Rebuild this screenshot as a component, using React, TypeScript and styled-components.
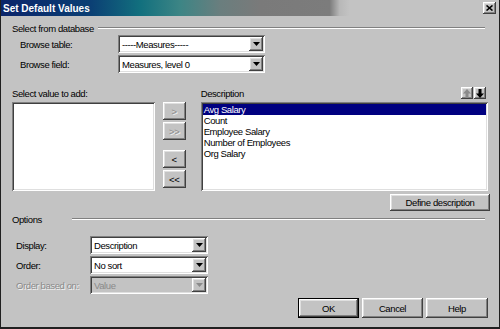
import styled, {createGlobalStyle} from "styled-components";

const Global = createGlobalStyle`
  body {
    margin: 0;
    background: #c3c3c3;
  }
`;

const sunken = `
  box-shadow: inset 1px 1px #808080, inset -1px -1px #ffffff,
    inset 2px 2px #404040, inset -2px -2px #dfdfdf;
`;

const raised = `
  box-shadow: inset -1px -1px #404040, inset 1px 1px #ffffff,
    inset -2px -2px #808080, inset 2px 2px #dfdfdf;
`;

const Window = styled.div`
  width: 500px;
  height: 329px;
  box-sizing: border-box;
  background: #c3c3c3;
  border-left: 1px solid #202020;
  border-right: 1px solid #202020;
  border-bottom: 2px solid #202020;
  display: flex;
  flex-direction: column;
  font-family: "Liberation Sans", Arial, sans-serif;
  font-size: 9.5px;
  letter-spacing: -0.4px;
  color: #000;
`;

const TitleBar = styled.div`
  height: 16px;
  flex-shrink: 0;
  display: flex;
  align-items: center;
  padding: 0 3px 0 2px;
  background: linear-gradient(90deg, #0a246a 0%, #0b3f74 18%, #12707e 28%, #3d8585 36%,
    #6a7e7e 44%, #7a7a7a 52%, #7c7c7c 66%, #b8b8b8 68%, #c3c3c3 70%);
  color: #fff;
  font-weight: bold;
  font-size: 10px;
  letter-spacing: 0;
`;

const CloseButton = styled.div`
  margin-left: auto;
  width: 13px;
  height: 12px;
  background: #c3c3c3;
  ${raised}
  display: flex;
  align-items: center;
  justify-content: center;
`;

const Body = styled.div`
  flex: 1;
  padding: 0 11px;
  display: flex;
  flex-direction: column;
`;

const GroupHeader = styled.div<{ $top: number; $gap: number }>`
  display: flex;
  align-items: center;
  height: 12px;
  margin-top: ${p => p.$top}px;
  gap: ${p => p.$gap}px;
`;

const GroupLine = styled.div`
  flex: 1;
  border-top: 1px solid #808080;
  border-bottom: 1px solid #ffffff;
  margin-right: 3px;
`;

const FieldGrid = styled.div<{ $label: number; $top: number; $indent: number }>`
  display: grid;
  grid-template-columns: ${p => p.$label}px auto;
  justify-content: start;
  row-gap: 2px;
  margin-top: ${p => p.$top}px;
  padding-left: ${p => p.$indent}px;
  align-items: center;
`;

const Label = styled.span<{ $disabled?: boolean }>`
  color: ${p => (p.$disabled ? "#8a8a8a" : "#000")};
  text-shadow: ${p => (p.$disabled ? "1px 1px #f4f4f4" : "none")};
`;

const Combo = styled.div<{ $width: number; $disabled?: boolean }>`
  width: ${p => p.$width}px;
  height: 18px;
  box-sizing: border-box;
  padding: 2px;
  display: flex;
  align-items: center;
  background: ${p => (p.$disabled ? "#c3c3c3" : "#fff")};
  color: ${p => (p.$disabled ? "#8a8a8a" : "#000")};
  ${sunken}
`;

const ComboText = styled.span`
  flex: 1;
  padding-left: 2px;
  white-space: nowrap;
  overflow: hidden;
`;

const ComboArrow = styled.div`
  width: 14px;
  height: 14px;
  background: #c3c3c3;
  ${raised}
  display: flex;
  align-items: center;
  justify-content: center;
`;

const ListsRow = styled.div`
  display: flex;
  margin-top: 13px;
  height: 105px;
`;

const ListColumn = styled.div<{ $width: number; $left: number }>`
  width: ${p => p.$width}px;
  margin-left: ${p => p.$left}px;
  display: flex;
  flex-direction: column;
  gap: 2px;
`;

const ListHeader = styled.div`
  height: 14px;
  display: flex;
  align-items: center;
  padding-right: 2px;
`;

const ListBox = styled.div`
  height: 89px;
  background: #fff;
  box-sizing: border-box;
  padding: 2px;
  ${sunken}
`;

const ListItem = styled.div<{ $selected?: boolean }>`
  height: 11px;
  line-height: 11px;
  padding-left: 1px;
  background: ${p => (p.$selected ? "#000080" : "transparent")};
  color: ${p => (p.$selected ? "#fff" : "#000")};
  white-space: nowrap;
`;

const MoveColumn = styled.div`
  margin-left: 8px;
  padding-top: 16px;
  display: flex;
  flex-direction: column;
  gap: 2px;
`;

const Button = styled.div<{ $w: number; $h: number; $disabled?: boolean; $default?: boolean }>`
  width: ${p => p.$w}px;
  height: ${p => p.$h}px;
  box-sizing: border-box;
  display: flex;
  align-items: center;
  justify-content: center;
  background: #c3c3c3;
  color: ${p => (p.$disabled ? "#8a8a8a" : "#000")};
  text-shadow: ${p => (p.$disabled ? "1px 1px #f4f4f4" : "none")};
  border: ${p => (p.$default ? "1px solid #000" : "none")};
  ${raised}
`;

const Spacer = styled.div<{ $h: number }>`
  height: ${p => p.$h}px;
`;

const OrderButtons = styled.div`
  margin-left: auto;
  display: flex;
  gap: 1px;
`;

const DefineRow = styled.div`
  display: flex;
  justify-content: flex-end;
  margin-top: 3px;
  margin-right: -2px;
`;

const FooterRow = styled.div`
  display: flex;
  justify-content: flex-end;
  gap: 3px;
  margin-top: 4px;
`;

function SelectBox({value, width, disabled}: { value: string; width: number; disabled?: boolean }) {
  return (
    <Combo $width={width} $disabled={disabled}>
      <ComboText>{value}</ComboText>
      <ComboArrow>
        <svg width="7" height="4" viewBox="0 0 7 4">
          <path d="M0 0h7L3.5 4z" fill={disabled ? "#8a8a8a" : "#000"} />
        </svg>
      </ComboArrow>
    </Combo>
  );
}

// thick arrow for the order buttons, rotated for "up"
function BigArrow({up, color}: { up?: boolean; color: string }) {
  return (
    <svg width="8" height="9" viewBox="0 0 8 9" style={{transform: up ? "rotate(180deg)" : undefined}}>
      <path d="M2.5 0h3v4.5H8L4 9 0 4.5h2.5z" fill={color} />
    </svg>
  );
}

const values = ["Avg Salary", "Count", "Employee Salary", "Number of Employees", "Org Salary"];

export default function App() {
  return (
    <>
      <Global />
      <Window>
        <TitleBar>
          Set Default Values
          <CloseButton>
            <svg width="7" height="6" viewBox="0 0 7 6">
              <path d="M0.5 0.5l6 5M6.5 0.5l-6 5" stroke="#000" strokeWidth="1.6" />
            </svg>
          </CloseButton>
        </TitleBar>
        <Body>
          <GroupHeader $top={6} $gap={4}>
            Select from database
            <GroupLine />
          </GroupHeader>
          <FieldGrid $label={98} $top={1} $indent={8}>
            <Label>Browse table:</Label>
            <SelectBox value="-----Measures-----" width={147} />
            <Label>Browse field:</Label>
            <SelectBox value="Measures, level 0" width={147} />
          </FieldGrid>

          <ListsRow>
            <ListColumn $width={143} $left={0}>
              <ListHeader>Select value to add:</ListHeader>
              <ListBox />
            </ListColumn>
            <MoveColumn>
              <Button $w={23} $h={18} $disabled>&gt;</Button>
              <Button $w={23} $h={18} $disabled>&gt;&gt;</Button>
              <Spacer $h={6} />
              <Button $w={23} $h={18}>&lt;</Button>
              <Button $w={23} $h={18}>&lt;&lt;</Button>
            </MoveColumn>
            <ListColumn $width={288} $left={15}>
              <ListHeader>
                Description
                <OrderButtons>
                  <Button $w={12} $h={12}><BigArrow up color="#8a8a8a" /></Button>
                  <Button $w={12} $h={12}><BigArrow color="#000" /></Button>
                </OrderButtons>
              </ListHeader>
              <ListBox>
                {values.map((v, i) => (
                  <ListItem key={v} $selected={i === 0}>{v}</ListItem>
                ))}
              </ListBox>
            </ListColumn>
          </ListsRow>

          <DefineRow>
            <Button $w={100} $h={17}>Define description</Button>
          </DefineRow>

          <GroupHeader $top={2} $gap={30}>
            Options
            <GroupLine />
          </GroupHeader>
          <FieldGrid $label={74} $top={11} $indent={4}>
            <Label>Display:</Label>
            <SelectBox value="Description" width={118} />
            <Label>Order:</Label>
            <SelectBox value="No sort" width={118} />
            <Label $disabled>Order based on:</Label>
            <SelectBox value="Value" width={118} disabled />
          </FieldGrid>

          <FooterRow>
            <Button $w={61} $h={20} $default>OK</Button>
            <Button $w={61} $h={20}>Cancel</Button>
            <Button $w={62} $h={20}>Help</Button>
          </FooterRow>
        </Body>
      </Window>
    </>
  );
}
